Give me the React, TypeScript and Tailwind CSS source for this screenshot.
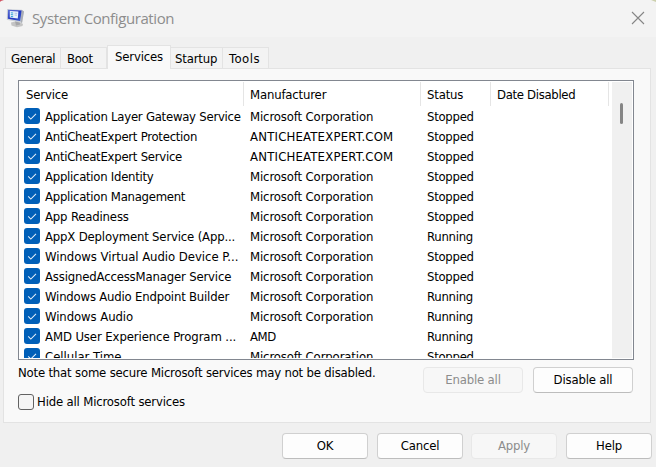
import React from "react";

type Service = { name: string; maker: string; status: string; tracking?: string };

const MS = "Microsoft Corporation";

const services: Service[] = [
  { name: "Application Layer Gateway Service", maker: MS, status: "Stopped", tracking: "tracking-[-0.25px]" },
  { name: "AntiCheatExpert Protection", maker: "ANTICHEATEXPERT.COM", status: "Stopped", tracking: "tracking-[-0.26px]" },
  { name: "AntiCheatExpert Service", maker: "ANTICHEATEXPERT.COM", status: "Stopped", tracking: "tracking-[-0.26px]" },
  { name: "Application Identity", maker: MS, status: "Stopped", tracking: "tracking-[-0.27px]" },
  { name: "Application Management", maker: MS, status: "Stopped", tracking: "tracking-[-0.27px]" },
  { name: "App Readiness", maker: MS, status: "Stopped" },
  { name: "AppX Deployment Service (App...", maker: MS, status: "Running" },
  { name: "Windows Virtual Audio Device P...", maker: MS, status: "Stopped", tracking: "tracking-[-0.04px]" },
  { name: "AssignedAccessManager Service", maker: MS, status: "Stopped" },
  { name: "Windows Audio Endpoint Builder", maker: MS, status: "Running", tracking: "tracking-[-0.2px]" },
  { name: "Windows Audio", maker: MS, status: "Running", tracking: "tracking-[-0.08px]" },
  { name: "AMD User Experience Program ...", maker: "AMD", status: "Running", tracking: "tracking-[-0.1px]" },
  { name: "Cellular Time", maker: MS, status: "Stopped", tracking: "tracking-[-0.02px]" },
];

function ComputerIcon() {
  return (
    <svg className="-mt-0.5 h-5 w-[19px] shrink-0" viewBox="0 0 19 20">
      <defs>
        <linearGradient id="screen" x1="0" y1="0" x2="1" y2="1">
          <stop offset="0" stopColor="#5f73d6" />
          <stop offset="0.5" stopColor="#2337c0" />
          <stop offset="1" stopColor="#3f62cf" />
        </linearGradient>
      </defs>
      <path d="M5 14.5 L12 13 L17 16 L16.5 18 L11 19.3 L5.5 17.5 Z" fill="#c4c4c4" />
      <path d="M9 13 L13.5 13 L14 16.5 L10 17.5 Z" fill="#a6a6a8" />
      <path d="M1 1 L15.5 1.8 L18 3.4 L16 15 L0.8 11.8 Z" fill="#cdd1d8" />
      <path d="M15.5 1.8 L18 3.4 L16 15 L14.6 14 Z" fill="#a9adb5" />
      <path d="M2 1.8 L15.6 2.6 L14.2 13 L1.8 10.8 Z" fill="url(#screen)" />
      <path d="M3.8 3 L12.4 3.6 L11.8 10.6 L3.8 9.6 Z" fill="#e8f2fc" />
      <path d="M4.8 4.8 L7.2 5 M4.8 6.6 L7.2 6.8 M4.8 8.4 L7.2 8.7" stroke="#36a2d8" strokeWidth="1" />
      <path d="M8.6 5.2 L11.2 5.4 M8.6 7 L11 7.2" stroke="#9fb5de" strokeWidth="0.8" />
    </svg>
  );
}

function Check() {
  return (
    <span className="flex size-4 shrink-0 items-center justify-center rounded-[3px] bg-[#005fb8]">
      <svg className="size-4" viewBox="0 0 16 16" fill="none">
        <path d="M4.2 8.4 L6.8 11 L12 5.8" stroke="#e2effa" strokeWidth="1.05" />
      </svg>
    </span>
  );
}

function Tab({ label, className }: { label: string; className: string }) {
  return (
    <div className={`flex h-[21px] items-center border-t border-r border-[#e3e3e3] bg-[#f3f3f3] pt-px ${className}`}>
      {label}
    </div>
  );
}

function Button({ label, disabled, className }: { label: string; disabled?: boolean; className: string }) {
  return (
    <button
      className={`h-[26px] shrink-0 rounded-[4px] border ${
        disabled ? "border-[#e8e8e8] bg-[#f7f7f7] text-[#8c8c8c]" : "border-[#d0d0d0] border-b-[#bdbdbd] bg-[#fdfdfd]"
      } ${className}`}
    >
      {label}
    </button>
  );
}

export default function App() {
  return (
    <div className="relative flex h-[467px] w-[656px] flex-col overflow-hidden bg-[#f0f0f0] font-['DejaVu_Sans_Condensed','DejaVu_Sans',sans-serif] text-[13px] leading-4 tracking-[-0.17px] whitespace-nowrap text-black [font-stretch:condensed]">
      <header className="flex h-[37px] shrink-0 items-center bg-[#f3f3f3] pr-[11px] pl-1.5">
        <ComputerIcon />
        <h1 className="ml-[7px] pb-0.5 font-['Open_Sans','Noto_Sans',sans-serif] text-[15px] leading-5 tracking-[-0.4px] text-[#8d8d8d] [font-stretch:normal]">
          System Configuration
        </h1>
        <svg className="mb-px ml-auto size-3.5" viewBox="0 0 14 14" fill="none">
          <path d="M1 1 L13 13 M13 1 L1 13" stroke="#858585" strokeWidth="1.1" />
        </svg>
      </header>

      <nav className="flex h-[31px] shrink-0 items-end pl-[5px]">
        <Tab label="General" className="w-14 border-l pl-[5px] tracking-[-0.25px]" />
        <Tab label="Boot" className="w-[46px] pl-[6px] tracking-[-0.3px]" />
        <div className="relative z-10 -mb-px flex h-6 w-16 items-start border border-b-0 border-[#e3e3e3] bg-[#f9f9f9] pt-[3px] pl-[7px]">
          Services
        </div>
        <Tab label="Startup" className="w-[52px] pl-1" />
        <Tab label="Tools" className="w-[46px] pl-1.5 tracking-[0.5px]" />
      </nav>

      <main className="ml-[3px] flex h-[355px] w-[648px] shrink-0 flex-col border border-[#e3e3e3] bg-[#f9f9f9] pt-[11px] pl-3.5">
        <section className="flex h-[280px] w-[616px] shrink-0 justify-between overflow-hidden border border-[#828790] bg-white p-px">
          <div className="h-full w-[590px] overflow-hidden">
            <div className="flex h-6 items-center [&>div]:flex [&>div]:h-6 [&>div]:items-center [&>div]:border-r [&>div]:border-[#e5e5e5] [&>div]:pt-px">
              <div className="w-[224px] pl-1.5">Service</div>
              <div className="w-[177px] pl-1.5">Manufacturer</div>
              <div className="w-[70px] pl-1.5">Status</div>
              <div className="w-[118px] pl-1.5 tracking-[-0.32px]">Date Disabled</div>
            </div>
            {services.map((s) => (
              <div key={s.name} className="flex h-5 items-center pl-1">
                <Check />
                <div className={`w-[210px] pt-px pl-[5px] ${s.tracking ?? ""}`}>{s.name}</div>
                <div className={`w-[177px] pt-px ${s.maker === MS ? "tracking-[-0.13px]" : s.maker === "AMD" ? "tracking-[-0.4px]" : "tracking-[0.2px]"}`}>
                  {s.maker}
                </div>
                <div className="pt-px tracking-[-0.27px]">{s.status}</div>
              </div>
            ))}
          </div>
          <div className="flex w-5 justify-center bg-[#f0f0f0] pt-[21px]">
            <div className="mr-px h-[21px] w-[3px] rounded-full bg-[#858585]" />
          </div>
        </section>

        <div className="flex h-[62px] w-[615px] items-start">
          <div className="flex flex-col pt-[5px]">
            <p className="tracking-[-0.185px]">Note that some secure Microsoft services may not be disabled.</p>
            <label className="mt-3 flex items-center gap-[3px]">
              <span className="size-4 rounded-[3px] border border-[#626262] bg-[#f5f5f5]" />
              <span className="pt-px">Hide all Microsoft services</span>
            </label>
          </div>
          <div className="mt-[7px] ml-auto flex gap-2.5">
            <Button label="Enable all" disabled className="w-[100px]" />
            <Button label="Disable all" className="w-[100px]" />
          </div>
        </div>
      </main>

      <footer className="flex justify-end gap-[9px] pt-2.5 pr-1">
        <Button label="OK" className="w-[86px]" />
        <Button label="Cancel" className="w-[86px]" />
        <Button label="Apply" disabled className="-ml-px w-[86px]" />
        <Button label="Help" className="w-[86px]" />
      </footer>
      <svg className="absolute top-0 left-0 h-1 w-1" viewBox="0 0 4 4">
        <path d="M0 0 H4 L1 1 L0 2 Z" fill="#d15260" />
      </svg>
      <svg className="absolute top-0 right-0 h-1 w-1.5" viewBox="0 0 6 4">
        <path d="M1 0 H6 V2 Z" fill="#ccd0ad" />
      </svg>
    </div>
  );
}
